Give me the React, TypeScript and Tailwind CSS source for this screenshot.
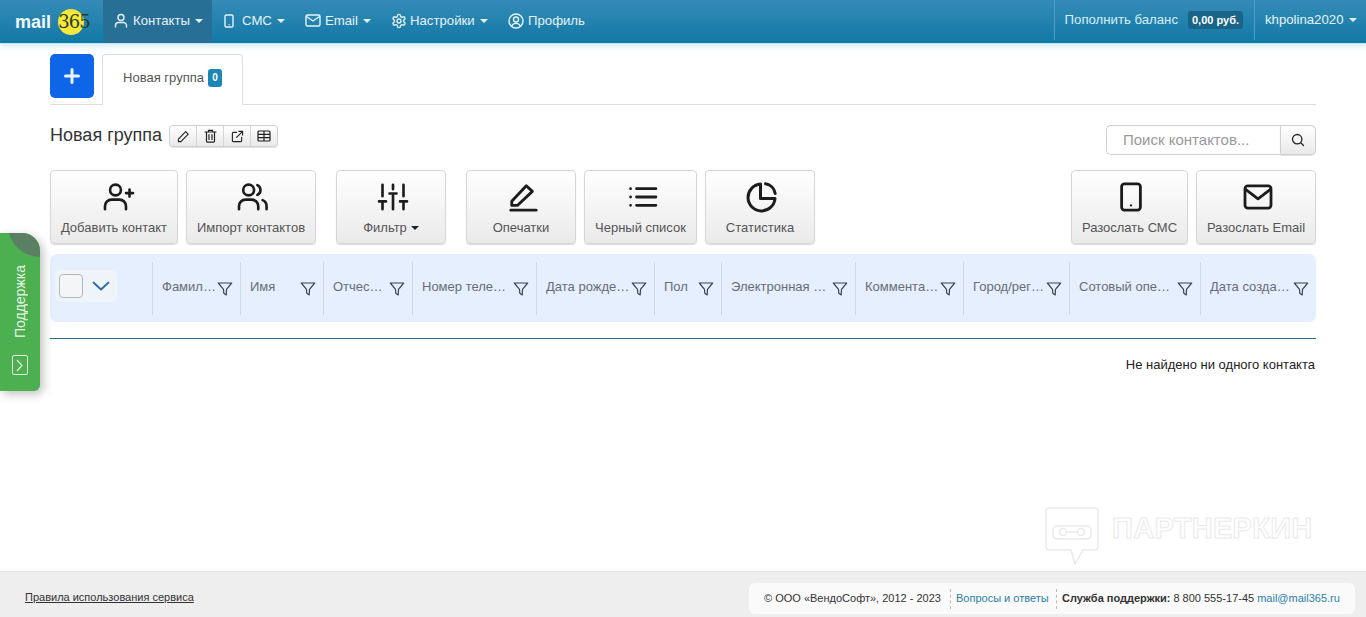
import React from "react";

const FONT = "[font-family:'Liberation_Sans',Arial,sans-serif]";

function Caret({ className = "" }: { className?: string }) {
  return <span className={"inline-block w-0 h-0 border-x-[4px] border-x-transparent border-t-[4px] border-t-current " + className} />;
}

function Filter() {
  return (
    <svg width="16" height="16" viewBox="0 0 16 16" fill="none" stroke="#3b4350" strokeWidth="1.2" strokeLinejoin="round" className="shrink-0 mt-[2px]">
      <path d="M1.300 2h13.400L9.500 8.300l-.3 5.700-2.400-1.700-.3-4z" />
    </svg>
  );
}

type Col = { label: string; w: string };
const cols: Col[] = [
  { label: "Фамилия", w: "w-[88px]" },
  { label: "Имя", w: "w-[83px]" },
  { label: "Отчество", w: "w-[89px]" },
  { label: "Номер телефона", w: "w-[124px]" },
  { label: "Дата рождения", w: "w-[118px]" },
  { label: "Пол", w: "w-[67px]" },
  { label: "Электронная почта", w: "w-[134px]" },
  { label: "Комментарий", w: "w-[108px]" },
  { label: "Город/регион", w: "w-[106px]" },
  { label: "Сотовый оператор", w: "w-[131px]" },
  { label: "Дата создания", w: "w-[116px]" },
];

const sw = { fill: "none", stroke: "#1c1c1c", strokeWidth: 3, strokeLinecap: "round" as const, strokeLinejoin: "round" as const };

const IconAdd = () => (
  <svg width="32" height="28" viewBox="0 0 36 32" className="ml-[10px]" {...sw}>
    <circle cx="14" cy="8" r="6.200" />
    <path d="M2 30v-3.500a7.500 7.500 0 0 1 7.500-7.500h9a7.500 7.500 0 0 1 7.500 7.500V30" />
    <path d="M26 11.500h8M30 7.500v8" />
  </svg>
);
const IconImport = () => (
  <svg width="32" height="28" viewBox="0 0 36 32" className="ml-[4px]" {...sw}>
    <circle cx="13" cy="8" r="6.200" />
    <path d="M2 30v-3.500A7.500 7.500 0 0 1 9.500 19h7a7.500 7.500 0 0 1 7.500 7.500V30" />
    <path d="M23 2.500a6.200 6.200 0 0 1 0 11.200M29 19.600a7.500 7.500 0 0 1 4.500 6.900V30" />
  </svg>
);
const IconFilter = () => (
  <svg width="32" height="28" viewBox="0 0 34 32" className="ml-[4px]" {...sw}>
    <path d="M5 2v13M5 22v8M17 2v5M17 14v16M29 2v13M29 22v8" />
    <path d="M1 21h8M13 12h8M25 21h8" />
  </svg>
);
const IconEdit = () => (
  <svg width="30" height="30" viewBox="0 0 32 32" className="ml-[3px]" {...sw}>
    <path d="M4 20.500 19.500 4l6.500 6L10 25H4z" />
    <path d="M3 30h27" />
  </svg>
);
const IconList = () => (
  <svg width="30" height="24" viewBox="0 0 30 26" className="ml-[5px]" {...sw}>
    <path d="M8 4h21M8 13h21M8 22h21" />
    <path d="M1.500 4h.01M1.500 13h.01M1.500 22h.01" strokeWidth="3" />
  </svg>
);
const IconPie = () => (
  <svg width="32" height="32" viewBox="0 0 32 32" className="ml-[4px]" {...sw}>
    <path d="M14.500 3A13.500 13.500 0 1 0 29 17.500H14.500z" />
    <path d="M19.500 2.800A11.500 11.500 0 0 1 29.200 12.500" />
  </svg>
);
const IconPhone = () => (
  <svg width="24" height="30" viewBox="0 0 24 32" className="ml-[3px]" {...sw}>
    <rect x="2" y="2" width="20" height="28" rx="3" />
    <path d="M12 25h.01" strokeWidth="2.400" />
  </svg>
);
const IconMail = () => (
  <svg width="32" height="26" viewBox="0 0 32 28" className="ml-[4px]" {...sw}>
    <rect x="2" y="2" width="28" height="24" rx="3" />
    <path d="m3 6 13 10 13-10" />
  </svg>
);

function ToolButton({ w, label, children, caret }: { w: string; label: string; children: React.ReactNode; caret?: boolean }) {
  return (
    <button className={w + " h-[74px] shrink-0 flex flex-col items-center rounded-[4px] border border-[#d6d6d6] bg-gradient-to-b from-white to-[#eaeaea] shadow-[0_1px_1px_rgba(0,0,0,0.14)] text-[13px] leading-[16px] text-[#555]"}>
      <span className="h-[36px] mt-[8px] flex items-center justify-center">{children}</span>
      <span className="mt-[5px] flex items-center gap-[4px] whitespace-nowrap">
        {label}
        {caret && <Caret className="text-[#222]" />}
      </span>
    </button>
  );
}

function NavItem({ icon, label, caret, active, cls }: { icon: React.ReactNode; label: string; caret?: boolean; active?: boolean; cls: string }) {
  return (
    <div className={cls + " h-full flex items-center text-[13.200px] text-[#e6f3f8] pb-[2px] " + (active ? "bg-[#276f95]" : "")}>
      {icon}
      <span>{label}</span>
      {caret && <Caret className="ml-[5px] text-[#e6f3f8]" />}
    </div>
  );
}

const navStroke = { fill: "none", stroke: "#e6f3f8", strokeWidth: 1.4, strokeLinecap: "round" as const, strokeLinejoin: "round" as const };

export default function App() {
  return (
    <div className={FONT + " relative h-[617px] w-[1366px] overflow-hidden bg-white flex flex-col"}>
      {/* header */}
      <header className="h-[44px] shrink-0 flex bg-gradient-to-b from-[#338cb6] to-[#0f78a6] border-b border-[#bfe6f5] shadow-[0_2px_6px_rgba(120,190,225,0.35)]">
        <div className="w-[103px] shrink-0 flex items-center pl-[15px]">
          <span className="text-[18px] font-bold text-[#f0f8fb] leading-none">mail</span>
          <span className="relative ml-[6px] w-[34px] h-[28px] flex items-center justify-center">
            <span className="absolute left-[1px] top-[1px] w-[26px] h-[26px] rounded-full bg-[#f6e83a]" />
            <span className="relative text-[18px] leading-none text-[#2b3a20] [font-family:'DejaVu_Serif',serif] font-light tracking-[-1px]">365</span>
          </span>
        </div>
        <NavItem
          active
          caret
          cls="w-[109px] pl-[11px]"
          label="Контакты"
          icon={
            <svg width="14" height="15" viewBox="0 0 14 15" className="mr-[5px]" {...navStroke}>
              <circle cx="7" cy="4.500" r="3" />
              <path d="M1.500 14v-1.500a3 3 0 0 1 3-3h5a3 3 0 0 1 3 3V14" />
            </svg>
          }
        />
        <NavItem
          caret
          cls="ml-[12px] w-[81px]"
          label="СМС"
          icon={
            <svg width="10" height="14" viewBox="0 0 10 14" className="mr-[8px]" {...navStroke}>
              <rect x="1" y="1" width="8" height="12" rx="1.200" />
              <path d="M5 10.800h.01" />
            </svg>
          }
        />
        <NavItem
          caret
          cls="w-[86px]"
          label="Email"
          icon={
            <svg width="16" height="13" viewBox="0 0 16 13" className="mr-[4px]" {...navStroke}>
              <rect x="1" y="1" width="14" height="11" rx="1.500" />
              <path d="m1.500 2.500 6.500 4.500 6.500-4.500" />
            </svg>
          }
        />
        <NavItem
          caret
          cls="w-[117px]"
          label="Настройки"
          icon={
            <svg width="16" height="16" viewBox="0 0 24 24" className="mr-[3px]" fill="none" stroke="#e6f3f8" strokeWidth="2" strokeLinecap="round" strokeLinejoin="round">
              <path d="M12.220 2h-.44a2 2 0 0 0-2 2v.18a2 2 0 0 1-1 1.730l-.43.25a2 2 0 0 1-2 0l-.15-.08a2 2 0 0 0-2.730.73l-.22.38a2 2 0 0 0 .73 2.730l.15.1a2 2 0 0 1 1 1.720v.51a2 2 0 0 1-1 1.740l-.15.09a2 2 0 0 0-.73 2.730l.22.38a2 2 0 0 0 2.730.73l.15-.08a2 2 0 0 1 2 0l.43.25a2 2 0 0 1 1 1.730V20a2 2 0 0 0 2 2h.44a2 2 0 0 0 2-2v-.18a2 2 0 0 1 1-1.730l.43-.25a2 2 0 0 1 2 0l.15.08a2 2 0 0 0 2.730-.73l.22-.39a2 2 0 0 0-.73-2.730l-.15-.08a2 2 0 0 1-1-1.740v-.5a2 2 0 0 1 1-1.740l.15-.09a2 2 0 0 0 .73-2.730l-.22-.38a2 2 0 0 0-2.730-.73l-.15.08a2 2 0 0 1-2 0l-.43-.25a2 2 0 0 1-1-1.730V4a2 2 0 0 0-2-2z" />
              <circle cx="12" cy="12" r="3" />
            </svg>
          }
        />
        <NavItem
          cls=""
          label="Профиль"
          icon={
            <svg width="16" height="16" viewBox="0 0 16 16" className="mr-[4px]" {...navStroke}>
              <circle cx="8" cy="8" r="7" />
              <circle cx="8" cy="6.500" r="2.500" />
              <path d="M3.800 13c.8-1.800 2.300-2.600 4.200-2.600s3.400.8 4.200 2.600" />
            </svg>
          }
        />
        <div className="ml-auto flex h-[40px]">
          <div className="border-l border-[#4f9fc4] pl-[10px] pr-[11px] flex items-center text-[13.200px] text-[#d5eef8]">
            <span>Пополнить баланс</span>
            <span className="ml-[10px] h-[18px] px-[4px] w-[55px] rounded-[3px] bg-[#1a6488] text-white text-[11px] font-bold flex items-center justify-center whitespace-nowrap">0,00 руб.</span>
          </div>
          <div className="w-[112px] border-l border-[#4f9fc4] pl-[10px] flex items-center text-[13.200px] text-[#e6f3f8]">
            <span>khpolina2020</span>
            <Caret className="ml-[6px]" />
          </div>
        </div>
      </header>

      <main className="flex-1 px-[50px] flex flex-col min-h-0">
        {/* tabs */}
        <div className="mt-[10px] h-[51px] shrink-0 flex border-b border-[#dedede]">
          <button className="w-[44px] h-[44px] rounded-[5px] bg-[#0d66e8] flex items-center justify-center">
            <svg width="16" height="16" viewBox="0 0 16 16" stroke="#eaf2ff" strokeWidth="3" strokeLinecap="round">
              <path d="M8 1.500v13M1.500 8h13" />
            </svg>
          </button>
          <div className="ml-[8px] w-[141px] h-[51px] bg-white rounded-t-[4px] border border-b-0 border-[#dedede] flex items-center justify-center gap-[4px] text-[13px] text-[#555] pb-[5px]">
            <span>Новая группа</span>
            <span className="w-[14px] h-[18px] rounded-[3px] bg-[#1c86b4] text-white text-[10px] font-bold flex items-center justify-center">0</span>
          </div>
        </div>

        {/* title */}
        <div className="mt-[20px] h-[30px] shrink-0 flex items-start">
          <span className="text-[18px] leading-[21px] text-[#333]">Новая группа</span>
          <div className="ml-[7px] h-[22px] w-[109px] flex rounded-[4px] border border-[#cfcfcf] bg-gradient-to-b from-white to-[#e9e9e9] shadow-[0_1px_1px_rgba(0,0,0,0.12)] divide-x divide-[#d5d5d5]">
            <span className="flex-1 flex items-center justify-center">
              <svg width="13" height="13" viewBox="0 0 14 14" fill="none" stroke="#222" strokeWidth="1.200" strokeLinejoin="round"><path d="M1.500 12.500V9.800l7.800-8 2.800 2.700-7.900 8z" /></svg>
            </span>
            <span className="flex-1 flex items-center justify-center">
              <svg width="13" height="14" viewBox="0 0 13 14" fill="none" stroke="#222" strokeWidth="1.200" strokeLinecap="round"><path d="M1 3h11M4.500 3V1.300h4V3M2.500 3v9a1.200 1.200 0 0 0 1.200 1.200h5.600A1.200 1.200 0 0 0 10.500 12V3M5 5.500v5M8 5.500v5" /></svg>
            </span>
            <span className="flex-1 flex items-center justify-center">
              <svg width="13" height="13" viewBox="0 0 14 14" fill="none" stroke="#222" strokeWidth="1.200" strokeLinecap="round"><path d="M11.500 8v3.500a1 1 0 0 1-1 1h-8a1 1 0 0 1-1-1v-8a1 1 0 0 1 1-1H6M8.500 1.500h4v4M12.500 1.500 6 8" /></svg>
            </span>
            <span className="flex-1 flex items-center justify-center">
              <svg width="14" height="12" viewBox="0 0 14 12" fill="none" stroke="#222" strokeWidth="1.200"><rect x="1" y="1" width="12" height="10" rx="1" /><path d="M1 4.300h12M1 7.700h12M7 1v10" /></svg>
            </span>
          </div>
          <div className="ml-auto flex h-[30px]">
            <div className="w-[174px] rounded-l-[5px] border border-r-0 border-[#cfcfcf] pl-[16px] flex items-center text-[15px] text-[#999]">Поиск контактов...</div>
            <div className="w-[36px] rounded-r-[5px] border border-[#cfcfcf] bg-gradient-to-b from-white to-[#e9e9e9] shadow-[0_1px_1px_rgba(0,0,0,0.12)] flex items-center justify-center">
              <svg width="14" height="14" viewBox="0 0 14 14" fill="none" stroke="#222" strokeWidth="1.300" strokeLinecap="round"><circle cx="6.200" cy="6.200" r="4.700" /><path d="m9.800 9.800 2.700 2.700" /></svg>
            </div>
          </div>
        </div>

        {/* toolbar */}
        <div className="mt-[15px] shrink-0 flex">
          <div className="flex gap-[8px]">
            <ToolButton w="w-[128px]" label="Добавить контакт"><IconAdd /></ToolButton>
            <ToolButton w="w-[130px]" label="Импорт контактов"><IconImport /></ToolButton>
          </div>
          <div className="ml-[20px]">
            <ToolButton w="w-[110px]" label="Фильтр" caret><IconFilter /></ToolButton>
          </div>
          <div className="ml-[20px] flex gap-[8px]">
            <ToolButton w="w-[110px]" label="Опечатки"><IconEdit /></ToolButton>
            <ToolButton w="w-[113px]" label="Черный список"><IconList /></ToolButton>
            <ToolButton w="w-[110px]" label="Статистика"><IconPie /></ToolButton>
          </div>
          <div className="ml-auto flex gap-[8px]">
            <ToolButton w="w-[117px]" label="Разослать СМС"><IconPhone /></ToolButton>
            <ToolButton w="w-[120px]" label="Разослать Email"><IconMail /></ToolButton>
          </div>
        </div>

        {/* table header */}
        <div className="mt-[10px] h-[68px] shrink-0 rounded-[7px] bg-[#e6effe] flex items-center">
          <div className="w-[102px] shrink-0 pl-[5px] pb-[4px]">
            <div className="w-[62px] h-[32px] rounded-[6px] bg-[#eff3fa] flex items-center pl-[4px]">
              <span className="w-[24px] h-[24px] rounded-[4px] border border-[#b5b8bd] bg-[#f4f5f7]" />
              <svg width="18" height="10" viewBox="0 0 18 10" fill="none" stroke="#2b6da8" strokeWidth="1.800" strokeLinecap="round" strokeLinejoin="round" className="ml-[9px]"><path d="m1.500 1.500 7.500 7 7.500-7" /></svg>
            </div>
          </div>
          {cols.map((c) => (
            <div key={c.label} className={c.w + " h-[53px] shrink-0 border-l border-[#d0d8e4] pl-[9px] pr-[7px] flex items-center gap-px text-[13px] text-[#666d78]"}>
              <span className="truncate flex-1 min-w-0 pb-[3px]">{c.label}</span>
              <Filter />
            </div>
          ))}
        </div>

        <div className="mt-[16px] h-px bg-[#2a6f8f] shrink-0" />
        <div className="mt-[18px] text-right text-[13px] leading-[16px] text-[#222] pr-px">Не найдено ни одного контакта</div>
      </main>

      {/* footer */}
      <footer className="h-[46px] shrink-0 border-t border-[#e6e6e6] bg-[#eeeeee] flex items-start pl-[25px] pr-[11px]">
        <span className="mt-[18px] text-[11px] leading-[14px] text-[#333] underline">Правила использования сервиса</span>
        <div className="ml-auto mt-[11px] h-[31px] w-[606px] rounded-[6px] bg-[#fafafa] flex items-center text-[11px] text-[#333] whitespace-nowrap">
          <span className="w-[201px] pl-[15px]">© ООО «ВендоСофт», 2012 - 2023</span>
          <span className="h-[20px] border-l border-dashed border-[#bbb] pl-[5px] w-[106px] flex items-center text-[#2a7fa8]">Вопросы и ответы</span>
          <span className="h-[20px] border-l border-dashed border-[#bbb] pl-[5px] flex items-center">
            <b className="mr-[3px]">Служба поддержки:</b> 8 800 555-17-45 <span className="ml-[3px] text-[#2a7fa8]">mail@mail365.ru</span>
          </span>
        </div>
      </footer>

      {/* support tab */}
      <div className="absolute left-0 top-[233px] w-[40px] h-[158px] rounded-tr-[18px] rounded-br-[6px] bg-[#4caf50] shadow-[3px_3px_10px_rgba(0,0,0,0.25)] overflow-hidden flex flex-col items-center">
        <span className="absolute left-[8px] top-[-40px] w-[64px] h-[64px] rounded-full bg-[#5a7f63]" />
        <span className="mt-[32px] ml-[-1px] text-[14px] leading-none text-[#e4f4e4] [writing-mode:vertical-rl] rotate-180">Поддержка</span>
        <span className="mt-[17px] ml-[-1px] w-[16px] h-[20px] rounded-[2px] border border-[#dff3df] flex items-center justify-center">
          <svg width="7" height="13" viewBox="0 0 7 13" fill="none" stroke="#dff3df" strokeWidth="1.200"><path d="m1 1 5 5.500-5 5.500" /></svg>
        </span>
      </div>

      {/* watermark */}
      <div className="absolute left-[1045px] top-[507px] flex items-center opacity-80">
        <svg width="54" height="58" viewBox="0 0 54 58" fill="none" stroke="#e6e6e6" strokeWidth="1.500">
          <path d="M4 1h46a3 3 0 0 1 3 3v36a3 3 0 0 1-3 3H38L30 57l-4-14H4a3 3 0 0 1-3-3V4a3 3 0 0 1 3-3z" />
          <rect x="8" y="19" width="38" height="13" rx="4" />
          <circle cx="18" cy="25" r="3.500" />
          <circle cx="36" cy="25" r="3.500" />
          <path d="M21 25h12" />
        </svg>
        <span className="ml-[13px] pb-[16px] text-[29px] leading-none font-bold text-transparent [-webkit-text-stroke:1px_#e6e6e6] tracking-[0.3px]">ПАРТНЕРКИН</span>
      </div>
    </div>
  );
}
